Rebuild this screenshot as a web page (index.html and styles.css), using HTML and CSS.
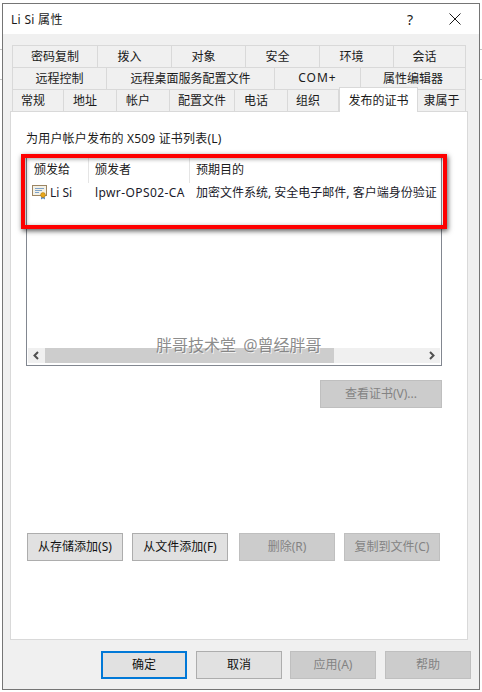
FILE: index.html
```html
<!DOCTYPE html>
<html lang="zh-CN">
<head>
  <meta charset="UTF-8" />
  <title>Li Si 属性</title>
  <link rel="stylesheet" href="styles.css">
</head>

<body>

  <div class="window">
    <div class="titlebar">
      <span class="title">Li Si 属性</span>
      <span class="help-btn">?</span>
      <svg class="close-btn" width="12" height="12" viewBox="0 0 12 12">
        <path d="M0.5 0.5 L11.5 11.5 M11.5 0.5 L0.5 11.5" stroke="#1a1a1a" stroke-width="1" fill="none" />
      </svg>
    </div>

    <div class="content">
      <div class="tabs">
        <div class="tab-row row-1">
          <div class="tab">密码复制</div>
          <div class="tab short">拨入</div>
          <div class="tab short">对象</div>
          <div class="tab short">安全</div>
          <div class="tab short">环境</div>
          <div class="tab short">会话</div>
        </div>
        <div class="tab-row row-2">
          <div class="tab">远程控制</div>
          <div class="tab">远程桌面服务配置文件</div>
          <div class="tab wide-latin">COM+</div>
          <div class="tab">属性编辑器</div>
        </div>
        <div class="tab-row row-3">
          <div class="tab short">常规</div>
          <div class="tab short">地址</div>
          <div class="tab short">帐户</div>
          <div class="tab">配置文件</div>
          <div class="tab short">电话</div>
          <div class="tab short">组织</div>
          <div class="tab active">发布的证书</div>
          <div class="tab">隶属于</div>
        </div>
      </div>

      <div class="panel">
        <div class="list-label">为用户帐户发布的 X509 证书列表(L)</div>

        <div class="list">
          <div class="list-cols list-head">
            <div class="col">颁发给</div>
            <div class="col">颁发者</div>
            <div class="col">预期目的</div>
          </div>
          <div class="list-cols list-row">
            <div class="cell-name">
              <svg class="cert-icon" width="16" height="15" viewBox="0 0 16 15">
                <rect x="0.5" y="0.5" width="14" height="10" fill="#f4f1e6" stroke="#9c8563" />
                <path d="M3 3.5 H12 M3 5.5 H10 M3 7.5 H7" stroke="#7fa3c9" stroke-width="1" fill="none" />
                <path d="M9.5 11 L9 14.5 L11 13.3 L13 14.5 L12.5 11 Z" fill="#3a78c2" />
                <circle cx="11" cy="10" r="2.4" fill="#e8a81c" stroke="#b97f10" stroke-width="0.6" />
              </svg>
              <span>Li Si</span>
            </div>
            <div class="col issuer">lpwr-OPS02-CA</div>
            <div class="col">加密文件系统, 安全电子邮件, 客户端身份验证</div>
          </div>
          <div class="list-fill"></div>
          <div class="scrollbar">
            <svg class="arrow" width="17" height="15" viewBox="0 0 17 15">
              <path d="M10 4 L6.5 7.5 L10 11" stroke="#505050" stroke-width="2" fill="none" />
            </svg>
            <div class="track"><div class="thumb"></div></div>
            <svg class="arrow" width="17" height="15" viewBox="0 0 17 15">
              <path d="M7 4 L10.5 7.5 L7 11" stroke="#505050" stroke-width="2" fill="none" />
            </svg>
          </div>
          <div class="red-box"></div>
          <div class="watermark">胖哥技术堂 @曾经胖哥</div>
        </div>

        <div class="view-row">
          <button class="btn disabled">查看证书(V)...</button>
        </div>

        <div class="action-row">
          <button class="btn">从存储添加(S)</button>
          <button class="btn">从文件添加(F)</button>
          <button class="btn disabled">删除(R)</button>
          <button class="btn disabled">复制到文件(C)</button>
        </div>
      </div>

      <div class="footer">
        <button class="btn default">确定</button>
        <button class="btn">取消</button>
        <button class="btn disabled">应用(A)</button>
        <button class="btn disabled">帮助</button>
      </div>
    </div>
  </div>

</body>
</html>
```

FILE: styles.css
```css
body {
  margin: 0;
  height: 692px;
  overflow: hidden;
  font-family: "Noto Sans", "Noto Sans CJK SC", sans-serif;
  font-size: 12px;
  color: #1a1a1a;
  /* Linien des Fensters dahinter */
  background:
    linear-gradient(#c4c4c4, #c4c4c4) 0 49px / 100% 1px no-repeat,
    linear-gradient(#c4c4c4, #c4c4c4) 0 79px / 100% 1px no-repeat,
    #fff;
}

.window {
  box-sizing: border-box;
  width: 478px;
  height: 687px;
  margin: 3px 0 0 2px;
  border: 1px solid #757575;
  display: flex;
  flex-direction: column;
}

/* Titelzeile */
.titlebar {
  flex: 0 0 30px;
  display: flex;
  align-items: center;
  padding-left: 8px;
  background: #fff;
}

.title {
  flex: 1;
  letter-spacing: 0.3px;
}

.help-btn {
  margin-right: 36px;
  font-size: 14px;
}

.close-btn {
  margin-right: 18px;
}

.content {
  flex: 1;
  display: flex;
  flex-direction: column;
  padding: 11px 10px 0 7px;
  background: #f0f0f0;
}

/* Tabs */
.tabs {
  margin-left: 2px;
  width: 454px;
}

.tab-row {
  display: grid;
  height: 22px;
}

.row-1 {
  grid-template-columns: 86px 74px 74px 74px 74px 72px;
}

.row-2 {
  grid-template-columns: 95px 168px 86px 105px;
}

.row-3 {
  grid-template-columns: 52px 53px 53px 65px 53px 51px 79px 48px;
}

.tab {
  box-sizing: border-box;
  display: flex;
  align-items: center;
  justify-content: center;
  height: 23px;
  padding-bottom: 2px;
  border: 1px solid #d9d9d9;
  border-left-width: 0;
  background: #f0f0f0;
  white-space: nowrap;
}

.tab:first-child {
  border-left-width: 1px;
}

.tab.short {
  padding-right: 10px;
}

.tab.wide-latin {
  letter-spacing: 1px;
}

.tab.active {
  position: relative;
  z-index: 2;
  height: 25px;
  margin-top: -2px;
  padding-bottom: 0;
  border-left-width: 1px;
  border-bottom: none;
  background: #fff;
}

/* Panel */
.panel {
  box-sizing: border-box;
  width: 458px;
  height: 529px;
  padding: 18px 25px 0 15px;
  border: 1px solid #d9d9d9;
  background: #fff;
  display: flex;
  flex-direction: column;
}

.list-label {
  height: 18px;
  line-height: 18px;
  letter-spacing: 0.2px;
}

.list {
  position: relative;
  box-sizing: border-box;
  height: 210px;
  margin-top: 8px;
  border: 1px solid #828790;
  display: flex;
  flex-direction: column;
}

.list-cols {
  display: grid;
  grid-template-columns: 61px 101px 1fr;
  white-space: nowrap;
}

.list-head {
  height: 26px;
  align-items: center;
}

.list-head .col {
  box-sizing: border-box;
  height: 100%;
  line-height: 25px;
  padding-left: 6px;
  border-left: 1px solid #e5e5e5;
}

.list-head .col:first-child {
  padding-left: 7px;
  border-left: none;
}

.list-row {
  height: 18px;
  align-items: center;
  color: #1a1a2a;
}

.list-row .col {
  padding-left: 7px;
}

.list-row .issuer {
  letter-spacing: 0.4px;
}

.cell-name {
  display: flex;
  align-items: center;
  padding-left: 5px;
  gap: 2px;
}

.cert-icon {
  flex: none;
}

.list-fill {
  flex: 1;
}

.scrollbar {
  flex: 0 0 15px;
  margin: 0 1px 2px;
  display: flex;
  align-items: center;
  background: #f0f0f0;
}

.arrow {
  flex: none;
}

.track {
  flex: 1;
  height: 100%;
}

.thumb {
  width: 289px;
  height: 100%;
  background: #cdcdcd;
}

.red-box {
  position: absolute;
  top: -3px;
  left: -6px;
  width: 426px;
  height: 75px;
  box-sizing: border-box;
  border: 4px solid #fe0000;
  box-shadow: 1px 2px 5px rgba(0, 0, 0, 0.65), inset 1px 1px 4px rgba(0, 0, 0, 0.4);
  pointer-events: none;
}

.watermark {
  position: absolute;
  top: 177px;
  left: 129px;
  font-size: 16px;
  line-height: 22px;
  word-spacing: 3px;
  white-space: nowrap;
  color: rgba(120, 120, 120, 0.85);
  text-shadow: 1px 1px 0 rgba(255, 255, 255, 0.7);
}

/* Buttons */
.btn {
  box-sizing: border-box;
  height: 28px;
  width: 96px;
  padding: 0 0 2px;
  border: 1px solid #adadad;
  background: #e1e1e1;
  color: #111;
  font: inherit;
}

.btn.disabled {
  background: #cccccc;
  border-color: #bfbfbf;
  color: #838383;
}

.btn.default {
  border: 2px solid #0078d7;
}

.view-row {
  display: flex;
  justify-content: flex-end;
  margin-top: 14px;
}

.view-row .btn {
  width: 122px;
}

.action-row {
  display: flex;
  margin-top: 125px;
  margin-left: 1px;
}

.action-row .btn:nth-child(2) {
  margin-left: 9px;
}

.action-row .btn:nth-child(3) {
  margin-left: 11px;
}

.action-row .btn:nth-child(4) {
  margin-left: 9px;
}

.footer {
  display: flex;
  justify-content: flex-end;
  gap: 9px;
  margin-top: 11px;
  margin-right: -2px;
}

.footer .btn {
  width: 86px;
}

.footer .btn:nth-child(2) {
  margin-right: -1px;
}
```
